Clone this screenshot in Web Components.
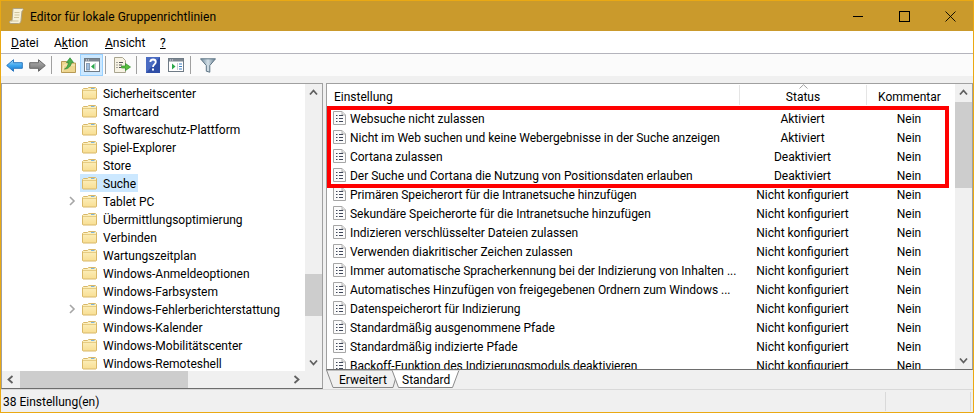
<!DOCTYPE html>
<html lang="de">
<head>
<meta charset="utf-8">
<title>Editor für lokale Gruppenrichtlinien</title>
<style>
  html, body { margin: 0; padding: 0; background: #f0f0f0; }
  body { font: 12px/16px Roboto, "Liberation Sans", sans-serif; color: #000; }
</style>
</head>
<body>
<gp-window>
  <gp-titlebar slot="title">Editor für lokale Gruppenrichtlinien</gp-titlebar>
  <gp-menubar slot="menu">
    <gp-menu-item style="width:43px"><u>D</u>atei</gp-menu-item>
    <gp-menu-item style="width:51px">A<u>k</u>tion</gp-menu-item>
    <gp-menu-item style="width:55px"><u>A</u>nsicht</gp-menu-item>
    <gp-menu-item><u>?</u></gp-menu-item>
  </gp-menubar>
  <gp-toolbar slot="toolbar"></gp-toolbar>
  <gp-tree slot="tree">
    <gp-tree-item>Sicherheitscenter</gp-tree-item>
    <gp-tree-item>Smartcard</gp-tree-item>
    <gp-tree-item>Softwareschutz-Plattform</gp-tree-item>
    <gp-tree-item>Spiel-Explorer</gp-tree-item>
    <gp-tree-item>Store</gp-tree-item>
    <gp-tree-item selected>Suche</gp-tree-item>
    <gp-tree-item expandable>Tablet PC</gp-tree-item>
    <gp-tree-item>Übermittlungsoptimierung</gp-tree-item>
    <gp-tree-item>Verbinden</gp-tree-item>
    <gp-tree-item>Wartungszeitplan</gp-tree-item>
    <gp-tree-item>Windows-Anmeldeoptionen</gp-tree-item>
    <gp-tree-item>Windows-Farbsystem</gp-tree-item>
    <gp-tree-item expandable>Windows-Fehlerberichterstattung</gp-tree-item>
    <gp-tree-item>Windows-Kalender</gp-tree-item>
    <gp-tree-item>Windows-Mobilitätscenter</gp-tree-item>
    <gp-tree-item>Windows-Remoteshell</gp-tree-item>
  </gp-tree>
  <gp-policy-list slot="list">
    <gp-policy-row><span>Websuche nicht zulassen</span><span slot="status">Aktiviert</span><span slot="comment">Nein</span></gp-policy-row>
    <gp-policy-row><span>Nicht im Web suchen und keine Webergebnisse in der Suche anzeigen</span><span slot="status">Aktiviert</span><span slot="comment">Nein</span></gp-policy-row>
    <gp-policy-row><span>Cortana zulassen</span><span slot="status">Deaktiviert</span><span slot="comment">Nein</span></gp-policy-row>
    <gp-policy-row><span>Der Suche und Cortana die Nutzung von Positionsdaten erlauben</span><span slot="status">Deaktiviert</span><span slot="comment">Nein</span></gp-policy-row>
    <gp-policy-row><span>Primären Speicherort für die Intranetsuche hinzufügen</span><span slot="status">Nicht konfiguriert</span><span slot="comment">Nein</span></gp-policy-row>
    <gp-policy-row><span>Sekundäre Speicherorte für die Intranetsuche hinzufügen</span><span slot="status">Nicht konfiguriert</span><span slot="comment">Nein</span></gp-policy-row>
    <gp-policy-row><span>Indizieren verschlüsselter Dateien zulassen</span><span slot="status">Nicht konfiguriert</span><span slot="comment">Nein</span></gp-policy-row>
    <gp-policy-row><span>Verwenden diakritischer Zeichen zulassen</span><span slot="status">Nicht konfiguriert</span><span slot="comment">Nein</span></gp-policy-row>
    <gp-policy-row><span>Immer automatische Spracherkennung bei der Indizierung von Inhalten ...</span><span slot="status">Nicht konfiguriert</span><span slot="comment">Nein</span></gp-policy-row>
    <gp-policy-row><span>Automatisches Hinzufügen von freigegebenen Ordnern zum Windows ...</span><span slot="status">Nicht konfiguriert</span><span slot="comment">Nein</span></gp-policy-row>
    <gp-policy-row><span>Datenspeicherort für Indizierung</span><span slot="status">Nicht konfiguriert</span><span slot="comment">Nein</span></gp-policy-row>
    <gp-policy-row><span>Standardmäßig ausgenommene Pfade</span><span slot="status">Nicht konfiguriert</span><span slot="comment">Nein</span></gp-policy-row>
    <gp-policy-row><span>Standardmäßig indizierte Pfade</span><span slot="status">Nicht konfiguriert</span><span slot="comment">Nein</span></gp-policy-row>
    <gp-policy-row><span>Backoff-Funktion des Indizierungsmoduls deaktivieren</span><span slot="status">Nicht konfiguriert</span><span slot="comment">Nein</span></gp-policy-row>
  </gp-policy-list>
  <gp-tabs slot="tabs"></gp-tabs>
  <gp-statusbar slot="status">38 Einstellung(en)</gp-statusbar>
</gp-window>

<script>
const ICONS = {
  scroll: `<svg width="15" height="16" viewBox="0 0 15 16"><path d="M4 .5h9.500c1 .3 1 2.300-.5 2.500l-1 9.500c-.2 1.700-1 3-2.500 3H2c-1.800 0-2-2.700-.2-2.700H3z" fill="#f8f2d8" stroke="#aea283"/><path d="M5.500 4.500h5M5.500 7h5M5 9.500h5" stroke="#cfc39c"/><path d="M2 13h7.500" stroke="#cfc39c"/></svg>`,
  back: `<svg width="17" height="13" viewBox="0 0 17 13"><defs><linearGradient id="b" x1="0" y1="0" x2="0" y2="1"><stop offset="0" stop-color="#a8dcfa"/><stop offset=".5" stop-color="#3ea6ee"/><stop offset="1" stop-color="#1a74cc"/></linearGradient></defs><path d="M.7 6.500 7.500.7v3h8.800v5.600H7.500v3z" fill="url(#b)" stroke="#2a78c0"/></svg>`,
  forward: `<svg width="17" height="13" viewBox="0 0 17 13"><defs><linearGradient id="f" x1="0" y1="0" x2="0" y2="1"><stop offset="0" stop-color="#b4b4b4"/><stop offset="1" stop-color="#6e6e6e"/></linearGradient></defs><path d="M16.300 6.500 9.500.7v3H.7v5.600h8.800v3z" fill="url(#f)" stroke="#666"/></svg>`,
  up: `<svg width="15" height="16" viewBox="0 0 15 16"><path d="M.5 4.500h5l1 1.500h8v9.500H.5z" fill="#eed68f" stroke="#b79a55"/><path d="M1.500 14.500 3 8h11" fill="none" stroke="#f8ecc2"/><path d="M3.500 12C6 11 7 8 7.500 5.500H5.500L9 .8l3.500 4.700h-2C10 9 7.500 12 3.500 12z" fill="#4eb04a" stroke="#2d8a34" stroke-width=".7"/></svg>`,
  tree: `<svg width="16" height="14" viewBox="0 0 16 14"><rect x=".5" y=".5" width="15" height="13" fill="#fff" stroke="#6f7b86"/><rect x="1" y="1" width="14" height="2.500" fill="#7d8791"/><path d="M2 2h1M4 2h1" stroke="#dde"/><rect x="2.500" y="5.500" width="3" height="6.500" fill="#fff" stroke="#8aa0b8"/><path d="M3 7h2M3 9h2M3 11h2" stroke="#3f7fc0"/><path d="M7 8.500 10.500 5.500v6z" fill="#2aa84a"/><path d="M11.500 5v7" stroke="#c5ccd3"/></svg>`,
  exportList: `<svg width="17" height="16" viewBox="0 0 17 16"><path d="M.5.500h8l3 3v12H.5z" fill="#f7f3e4" stroke="#a8a48f"/><path d="M2.500 5.500h1M5 5.500h4M2.500 8h1M5 8h3M2.500 10.500h1M5 10.500h2" stroke="#555"/><path d="M7.500 9h4V6.500L16.500 10l-5 3.500V11h-4z" fill="#58c03c" stroke="#2f8e2d" stroke-width=".7"/></svg>`,
  help: `<svg width="14" height="16" viewBox="0 0 14 16"><rect width="14" height="16" fill="#2f4ea6"/><path d="M0 0h14L0 16z" fill="#4a6bc2"/><path d="M4.300 5C4.500 3.200 5.600 2.500 7 2.500c1.600 0 2.800 1 2.800 2.500 0 2.300-2.800 2.500-2.800 5" fill="none" stroke="#fff" stroke-width="1.800"/><rect x="6" y="11.500" width="2" height="2" fill="#fff"/></svg>`,
  actionPane: `<svg width="16" height="14" viewBox="0 0 16 14"><rect x=".5" y=".5" width="15" height="13" fill="#fff" stroke="#6f7b86"/><rect x="1" y="1" width="14" height="2.500" fill="#7d8791"/><path d="M2 2h1M4 2h1" stroke="#dde"/><path d="M4 5.500 7.500 8.500 4 11.500z" fill="#2aa84a"/><path d="M9.500 5v7" stroke="#c5ccd3"/><path d="M11 6h3M11 8.500h3M11 11h3" stroke="#3f7fc0" stroke-width="1.200"/></svg>`,
  filter: `<svg width="16" height="15" viewBox="0 0 16 15"><defs><linearGradient id="u" x1="0" y1="0" x2="1" y2="0"><stop offset="0" stop-color="#6f8a9c"/><stop offset=".5" stop-color="#d4e0e8"/><stop offset="1" stop-color="#667f90"/></linearGradient></defs><path d="M.5.800h15L9.800 7.500v6.700l-3.500-1V7.500z" fill="url(#u)" stroke="#5f7585"/></svg>`,
  folder: `<svg width="15" height="13" viewBox="0 0 15 13"><defs><linearGradient id="d" x1="0" y1="0" x2="0" y2="1"><stop offset="0" stop-color="#fdf2c4"/><stop offset="1" stop-color="#f8de92"/></linearGradient></defs><path d="M.5 2.500 1.500 1.500h4l1-1h7l1 1v10l-.500.500H1l-.5-.5z" fill="url(#d)" stroke="#d9b868"/><path d="M1 3.500h13" stroke="#e6cc82"/><path d="M9 1.500h3.500" stroke="#7fb4dc"/></svg>`,
  policy: `<svg width="13" height="14" viewBox="0 0 13 14"><path d="M.5.500h8.500l3.500 3.500v9.500H.5z" fill="#fbfbfb" stroke="#a6a6a6"/><path d="M9 .5V4h3.500" fill="#e4e4e4" stroke="#b4b4b4"/><path d="M3 4.500h1.500M6 4.500h4M3 7.500h1.500M6 7.500h4M3 10.500h1.500M6 10.500h4" stroke="#40485a"/></svg>`,
};

class GpIcon extends HTMLElement {
  constructor() {
    super();
    this.attachShadow({ mode: 'open' });
    this.shadowRoot.innerHTML = `
      <style>:host { display: inline-flex; flex: none; } svg { display: block; }</style>
      ${ICONS[this.getAttribute('name')] || ''}`;
  }
}

class GpWindow extends HTMLElement {
  constructor() {
    super();
    this.attachShadow({ mode: 'open' });
    this.shadowRoot.innerHTML = `
      <style>
        :host {
          display: flex; flex-direction: column;
          width: 974px; height: 413px; box-sizing: border-box;
          border: 1px solid #eaa913; background: #f0f0f0; overflow: hidden;
        }
        .band { height: 7px; flex: none; background: #f0f0f0; }
        .main { display: flex; gap: 3px; height: 306px; flex: none; }
        .right { display: flex; flex-direction: column; width: 647px; }
      </style>
      <slot name="title"></slot>
      <slot name="menu"></slot>
      <slot name="toolbar"></slot>
      <div class="band"></div>
      <div class="main">
        <slot name="tree"></slot>
        <div class="right">
          <slot name="list"></slot>
          <slot name="tabs"></slot>
        </div>
      </div>
      <slot name="status"></slot>`;
  }
}

class GpTitlebar extends HTMLElement {
  constructor() {
    super();
    this.attachShadow({ mode: 'open' });
    this.shadowRoot.innerHTML = `
      <style>
        :host {
          display: flex; align-items: center; height: 30px; flex: none;
          background: #ca9a2c; padding-left: 8px;
        }
        gp-icon { margin-right: 6px; }
        .text { flex: 1; padding-top: 2px; letter-spacing: .06px; }
        .btn { width: 46px; display: flex; justify-content: center; }
        svg { display: block; }
      </style>
      <gp-icon name="scroll"></gp-icon>
      <span class="text"><slot></slot></span>
      <span class="btn"><svg width="10" height="10"><path d="M0 5.500h10" stroke="#000"/></svg></span>
      <span class="btn"><svg width="11" height="11"><rect x=".5" y=".5" width="10" height="10" fill="none" stroke="#000"/></svg></span>
      <span class="btn"><svg width="11" height="11"><path d="M.5.500l10 10M10.500.500l-10 10" stroke="#000" stroke-width=".9"/></svg></span>`;
  }
}

class GpMenubar extends HTMLElement {
  constructor() {
    super();
    this.attachShadow({ mode: 'open' });
    this.shadowRoot.innerHTML = `
      <style>
        :host {
          display: flex; align-items: center; height: 22px; flex: none;
          background: #fff; padding-left: 10px; border-bottom: 1px solid #b4b4bc;
        }
      </style>
      <slot></slot>`;
  }
}

class GpMenuItem extends HTMLElement {
  constructor() {
    super();
    this.attachShadow({ mode: 'open' });
    this.shadowRoot.innerHTML = `<style>:host { display: block; flex: none; padding-top: 2px; }</style><slot></slot>`;
  }
}

class GpToolbar extends HTMLElement {
  constructor() {
    super();
    this.attachShadow({ mode: 'open' });
    this.shadowRoot.innerHTML = `
      <style>
        :host {
          display: flex; align-items: center; height: 22px; flex: none;
          background: #fbfbfb; padding-left: 5px;
        }
        .sep { width: 1px; height: 18px; background: #a0a0a0; flex: none; }
        .slot { display: flex; align-items: center; justify-content: center; height: 22px; flex: none; }
        .on { background: #cce8ff; box-shadow: inset 0 0 0 1px #99d1ff; }
      </style>
      <span class="slot" style="width:17px"><gp-icon name="back"></gp-icon></span>
      <span class="slot" style="width:23px;justify-content:flex-end"><gp-icon name="forward"></gp-icon></span>
      <span class="sep" style="margin-left:5px"></span>
      <span class="slot" style="width:15px;margin-left:9px"><gp-icon name="up"></gp-icon></span>
      <span class="slot on" style="width:23px;margin-left:4px"><gp-icon name="tree"></gp-icon></span>
      <span class="sep" style="margin-left:2px"></span>
      <span class="slot" style="width:17px;margin-left:8px"><gp-icon name="exportList"></gp-icon></span>
      <span class="sep" style="margin-left:5px"></span>
      <span class="slot" style="width:14px;margin-left:9px"><gp-icon name="help"></gp-icon></span>
      <span class="slot" style="width:16px;margin-left:8px"><gp-icon name="actionPane"></gp-icon></span>
      <span class="sep" style="margin-left:6px"></span>
      <span class="slot" style="width:16px;margin-left:9px"><gp-icon name="filter"></gp-icon></span>`;
  }
}

class GpScrollbar extends HTMLElement {
  constructor() {
    super();
    this.attachShadow({ mode: 'open' });
    const horizontal = this.hasAttribute('horizontal');
    const start = this.getAttribute('start') || 0;
    const size = this.getAttribute('size') || 0;
    const chev = d => `<svg width="9" height="9" viewBox="0 0 9 9"><path d="${d}" fill="none" stroke="#606060" stroke-width="1.800"/></svg>`;
    const first = horizontal ? chev('M6.500 1 2.500 4.500l4 3.500') : chev('M1 6.500l3.500-4 3.500 4');
    const last = horizontal ? chev('M2.500 1l4 3.500-4 3.500') : chev('M1 2.500l3.500 4 3.500-4');
    this.shadowRoot.innerHTML = `
      <style>
        :host {
          display: flex; flex: none; background: #f0f0f0;
          flex-direction: ${horizontal ? 'row' : 'column'};
          ${horizontal ? 'height' : 'width'}: 17px;
        }
        .end { flex: none; width: 17px; height: 17px; display: flex; align-items: center; justify-content: center; }
        .track { flex: 1; display: flex; flex-direction: ${horizontal ? 'row' : 'column'}; }
        .thumb { background: #cdcdcd; flex: none;
          ${horizontal ? 'width' : 'height'}: ${size}px;
          margin-${horizontal ? 'left' : 'top'}: ${start}px; }
      </style>
      <span class="end">${first}</span>
      <div class="track"><div class="thumb"></div></div>
      <span class="end">${last}</span>`;
  }
}

class GpTree extends HTMLElement {
  constructor() {
    super();
    this.attachShadow({ mode: 'open' });
    this.shadowRoot.innerHTML = `
      <style>
        :host {
          display: grid; grid-template-columns: 303px 17px; grid-template-rows: 287px 17px;
          width: 322px; box-sizing: border-box; background: #f0f0f0;
          border: 1px solid #a0a0a0; border-bottom-color: #6d6d6d;
        }
        .rows { background: #fff; overflow: hidden; }
      </style>
      <div class="rows"><slot></slot></div>
      <gp-scrollbar start="173" size="42"></gp-scrollbar>
      <gp-scrollbar horizontal start="1" size="168"></gp-scrollbar>`;
  }
}

class GpTreeItem extends HTMLElement {
  constructor() {
    super();
    this.attachShadow({ mode: 'open' });
    this.shadowRoot.innerHTML = `
      <style>
        :host { display: flex; align-items: center; height: 18px; padding-left: 64px; }
        .chev { width: 14px; flex: none; display: flex; padding-left: 2px; box-sizing: border-box; }
        .label { display: flex; align-items: center; gap: 6px; height: 18px; padding: 0 2px; }
        .text { padding-top: 2px; }
        :host([selected]) .label { background: #cce8ff; }
      </style>
      <span class="chev">${this.hasAttribute('expandable')
        ? '<svg width="8" height="10" viewBox="0 0 8 10"><path d="M2 1l4 4-4 4" fill="none" stroke="#a6a6a6" stroke-width="1.600"/></svg>'
        : ''}</span>
      <span class="label"><gp-icon name="folder"></gp-icon><span class="text"><slot></slot></span></span>`;
  }
}

class GpPolicyList extends HTMLElement {
  constructor() {
    super();
    this.attachShadow({ mode: 'open' });
    this.shadowRoot.innerHTML = `
      <style>
        :host {
          display: flex; height: 287px; box-sizing: border-box; flex: none;
          border: 1px solid #a0a0a0; border-bottom-color: #6d6d6d; background: #fff;
        }
        .body { position: relative; flex: 1; overflow: hidden; }
        .head { display: grid; grid-template-columns: 413px 127px 86px; height: 22px; padding-top: 1px; box-sizing: border-box; margin-bottom: 2px; }
        .head div { position: relative; display: flex; align-items: center; padding-top: 3px; box-sizing: border-box; border-right: 1px solid #e5e5e5; height: 20px; }
        .head .name { padding-left: 7px; }
        .head .center { justify-content: center; }
        .caret { position: absolute; left: 59px; top: -1px; }
        /* rote Markierung liegt ueber den ersten vier Zeilen */
        .mark { position: absolute; left: 0; top: 22px; width: 622px; height: 82px; box-sizing: border-box; border: 4px solid #f00; pointer-events: none; }
        gp-scrollbar { margin-left: 3px; }
      </style>
      <div class="body">
        <div class="head">
          <div class="name">Einstellung</div>
          <div class="center">Status<svg class="caret" width="9" height="5" viewBox="0 0 9 5"><path d="M.5 4.500 4.500.7l4 3.800" fill="none" stroke="#a0a0a0"/></svg></div>
          <div class="center">Kommentar</div>
        </div>
        <slot></slot>
        <div class="mark"></div>
      </div>
      <gp-scrollbar start="1" size="86"></gp-scrollbar>`;
  }
}

class GpPolicyRow extends HTMLElement {
  constructor() {
    super();
    this.attachShadow({ mode: 'open' });
    this.shadowRoot.innerHTML = `
      <style>
        :host { display: grid; grid-template-columns: 412px 127px 86px; height: 19px; align-items: center; }
        .name { display: flex; align-items: center; gap: 4px; padding-left: 6px; white-space: nowrap; letter-spacing: -.03px; }
        .name span { padding-top: 2px; }
        .center { text-align: center; padding-top: 2px; }
      </style>
      <div class="name"><gp-icon name="policy"></gp-icon><span><slot></slot></span></div>
      <div class="center"><slot name="status"></slot></div>
      <div class="center"><slot name="comment"></slot></div>`;
  }
}

class GpTabs extends HTMLElement {
  constructor() {
    super();
    this.attachShadow({ mode: 'open' });
    this.shadowRoot.innerHTML = `
      <style>
        :host { display: block; position: relative; height: 19px; flex: none; background: #f0f0f0; }
        svg { position: absolute; left: 0; top: 0; }
        .tabs { position: relative; display: flex; height: 18px; align-items: center; padding-top: 1px; box-sizing: border-box; }
        .tab { flex: none; padding-top: 1px; }
      </style>
      <svg width="140" height="19" viewBox="0 0 140 19">
        <path d="M.5 0 7 17.500h60L72 0z" fill="#f0f0f0" stroke="#8a8a8a"/>
        <path d="M66 0 72.500 17.500h54L133 0z" fill="#fff" stroke="#8a8a8a"/>
        <path d="M66.500 0H133" stroke="#fff"/>
      </svg>
      <div class="tabs">
        <span class="tab" style="margin-left:13px;width:63px">Erweitert</span>
        <span class="tab">Standard</span>
      </div>`;
  }
}

class GpStatusbar extends HTMLElement {
  constructor() {
    super();
    this.attachShadow({ mode: 'open' });
    this.shadowRoot.innerHTML = `
      <style>
        :host {
          display: flex; align-items: center; height: 23px; flex: none; box-sizing: border-box;
          border-top: 1px solid #d9d9d9; background: #f0f0f0; padding-left: 2px;
        }
        .text { width: 882px; flex: none; padding-top: 2px; }
        .cell { width: 84px; flex: none; height: 19px; border-left: 1px solid #d9d9d9; border-right: 1px solid #d9d9d9; }
      </style>
      <span class="text"><slot></slot></span>
      <span class="cell"></span>`;
  }
}

customElements.define('gp-icon', GpIcon);
customElements.define('gp-window', GpWindow);
customElements.define('gp-titlebar', GpTitlebar);
customElements.define('gp-menubar', GpMenubar);
customElements.define('gp-menu-item', GpMenuItem);
customElements.define('gp-toolbar', GpToolbar);
customElements.define('gp-scrollbar', GpScrollbar);
customElements.define('gp-tree', GpTree);
customElements.define('gp-tree-item', GpTreeItem);
customElements.define('gp-policy-list', GpPolicyList);
customElements.define('gp-policy-row', GpPolicyRow);
customElements.define('gp-tabs', GpTabs);
customElements.define('gp-statusbar', GpStatusbar);
</script>
</body>
</html>
